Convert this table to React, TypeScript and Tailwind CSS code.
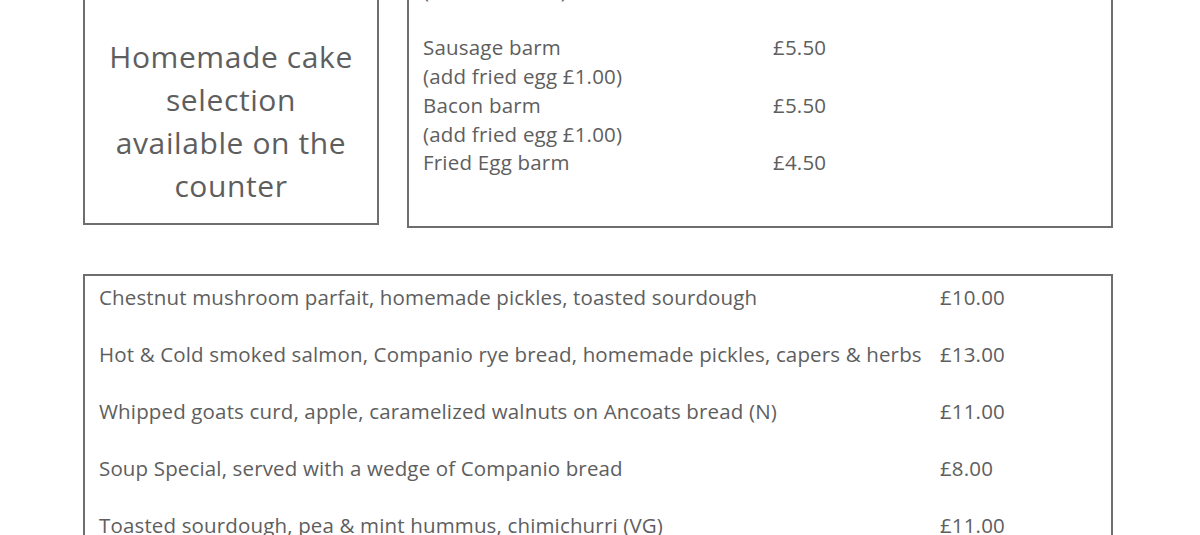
import React from 'react';

const barms = [
  { name: 'Sausage barm', price: '£5.50' },
  { name: '(add fried egg £1.00)', price: '' },
  { name: 'Bacon barm', price: '£5.50' },
  { name: '(add fried egg £1.00)', price: '' },
  { name: 'Fried Egg barm', price: '£4.50' },
];

const plates = [
  { name: 'Chestnut mushroom parfait, homemade pickles, toasted sourdough', price: '£10.00' },
  { name: 'Hot & Cold smoked salmon, Companio rye bread, homemade pickles, capers & herbs', price: '£13.00' },
  { name: 'Whipped goats curd, apple, caramelized walnuts on Ancoats bread (N)', price: '£11.00' },
  { name: 'Soup Special, served with a wedge of Companio bread', price: '£8.00' },
  { name: 'Toasted sourdough, pea & mint hummus, chimichurri (VG)', price: '£11.00' },
];

export default function App() {
  return (
    <div
      className="h-[535px] w-[1200px] overflow-hidden bg-white text-[#5e5e5e]"
      style={{ fontFamily: '"Open Sans", Lato, sans-serif' }}
    >
      <div className="-mt-[40px] pl-[83px]">
        <div className="flex items-start gap-[28px]">
          <div className="h-[265px] w-[296px] border-2 border-[#6e6e6e] pt-[73px] text-center text-[30px] leading-[43px] tracking-[0.6px]">
            Homemade cake
            <br />
            selection
            <br />
            available on the
            <br />
            counter
          </div>
          <div className="h-[268px] w-[706px] border-2 border-[#6e6e6e] pl-[14px] pt-[14px] text-[20.5px] leading-[28.7px] tracking-[0.2px]">
            <div className="grid grid-cols-[350px_auto]">
              <div>(add bacon £1)</div>
              <div />
              <div className="h-[28.7px]" />
              <div />
              {barms.map((b, i) => (
                <React.Fragment key={i}>
                  <div>{b.name}</div>
                  <div>{b.price}</div>
                </React.Fragment>
              ))}
            </div>
          </div>
        </div>

        <div className="mt-[46px] h-[320px] w-[1030px] border-2 border-[#6e6e6e] pl-[14px] pt-[6px] text-[20.5px] tracking-[0.15px]">
          {plates.map((p, i) => (
            <div key={i} className="grid h-[57px] grid-cols-[841px_auto] leading-[30px]">
              <div>{p.name}</div>
              <div>{p.price}</div>
            </div>
          ))}
        </div>
      </div>
    </div>
  );
}
